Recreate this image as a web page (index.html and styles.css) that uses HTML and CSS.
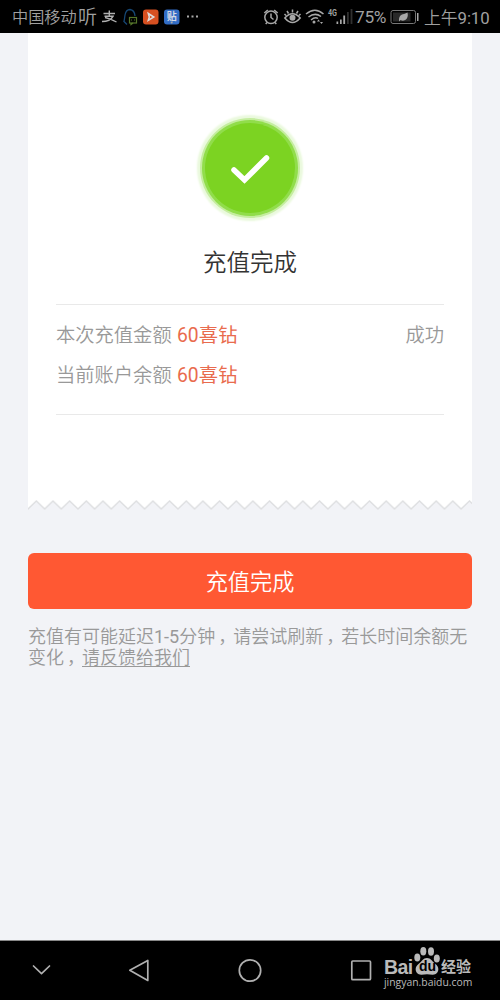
FILE: index.html
```
<!DOCTYPE html>
<html lang="zh-CN">
<head>
<meta charset="utf-8">
<title>充值完成</title>
<link rel="stylesheet" href="styles.css">
</head>
<body>
<div class="screen">
  <header class="status">
    <span class="carrier">中国移动</span>
    <span class="listen">听</span>
    <svg class="left-icons" width="103" height="20" viewBox="99 7 103 20">
      <path class="pay" d="M103.500 13.500H115M109.300 10.500V16M104.500 16.300H113Q110 21.500 102 21.500M105 17.500Q110 18.500 116.500 22"/>
      <path class="bell" d="M123.500 21L127 24.5M124 21.5Q124.500 19 125 15Q126 9.500 130 9.500Q134.500 10 135 16"/>
      <rect class="chat" x="129.500" y="17.500" width="7" height="5.500"/>
      <path class="chat" d="M131 20H132M134 20H135M131 23V24.500L133 23"/>
      <rect class="play-box" x="143" y="9.500" width="15.500" height="15" rx="3"/>
      <path class="play" d="M148.300 13.500L153.800 17L148.300 20.300L149.300 17Z"/>
      <rect class="post-box" x="164" y="9.500" width="15.500" height="15" rx="3"/>
      <text class="post" x="166.700" y="19.500">贴</text>
      <circle class="light" cx="171.700" cy="22.500" r="1"/>
      <path class="light" d="M187 15.500h2v2h-2zM191.500 15.500h2v2h-2zM196 15.500h2v2h-2z"/>
    </svg>
    <svg class="right-icons" width="93" height="22" viewBox="262 6 93 22">
      <g class="line">
        <circle cx="271" cy="17.300" r="6.200"/>
        <path d="M271 13.500V17.500L273.500 19.500M264.300 13L267.800 10M274.200 10L277.700 13M267 22.500L265.700 24M275 22.500L276.300 24"/>
        <path d="M284.800 18Q292.500 9.500 300.200 18Q292.500 27 284.800 18ZM292.500 9.500V12.500M287 11L288.500 13.500M298 11L296.500 13.500M284.500 14L286 15.500M300.500 14L299 15.500"/>
        <path d="M306 14Q315 6.500 323.500 14M308.500 17Q315 12 321 16.500M311 20Q315 16.500 318 18.500"/>
      </g>
      <circle class="light" cx="292.500" cy="17.800" r="3"/>
      <circle class="light" cx="314" cy="22" r="1.500"/>
      <path class="light" d="M317 21.500l1.500-2 1.500 2zM320 22l1.500 2 1.500-2z"/>
      <text class="network" x="328" y="16" textLength="9" lengthAdjust="spacingAndGlyphs">4G</text>
      <path class="light" d="M336.500 21.500h1.700v2.500h-1.700zM340 19.500h1.700v4.500h-1.700zM343.300 15.500h1.800v8.500h-1.800z"/>
      <path class="dim" d="M347 12h1.800v12h-1.800zM350.600 9h1.800v15h-1.800z"/>
    </svg>
    <span class="percent">75%</span>
    <svg class="battery" width="30" height="16" viewBox="390 9 30 16">
      <rect x="391" y="10.500" width="24.500" height="13" rx="2"/>
      <rect class="charge" x="393" y="12.500" width="17.500" height="9"/>
      <path class="light" d="M399 21.500Q398.500 16 402 14.500Q405 14 407.500 12.500Q408.500 17 406 19.500Q403.500 21.500 400.500 20ZM417 13h1.500v8H417z"/>
    </svg>
    <span class="clock">上午<span class="digits">9:10</span></span>
  </header>

  <main class="page">
    <section class="receipt">
      <div class="success">
        <svg width="50" height="50" viewBox="225 143 50 50"><path d="M234 170L244.500 180L266.500 158"/></svg>
      </div>
      <h1 class="title">充值完成</h1>
      <div class="details">
        <div class="row"><span>本次充值金额 <b>60喜钻</b></span><span>成功</span></div>
        <div class="row"><span>当前账户余额 <b>60喜钻</b></span></div>
      </div>
    </section>
    <svg class="tear" width="444" height="12">
      <defs>
        <pattern id="tooth" width="16.66" height="12" patternUnits="userSpaceOnUse">
          <path class="tooth-fill" d="M0 0H16.660V9L8.330 1L0 9Z"/>
          <path class="tooth-edge" d="M-1 8L0 9L8.330 1L16.660 9L17.660 8"/>
        </pattern>
      </defs>
      <rect width="444" height="12" fill="url(#tooth)"/>
    </svg>
    <button class="done" type="button">充值完成</button>
    <p class="note">充值有可能延迟<span class="digits">1-5</span>分钟<span class="comma">，</span>请尝试刷新<span class="comma">，</span>若长时间余额无<br>变化<span class="comma">，</span><a>请反馈给我们</a></p>
  </main>

  <footer class="nav">
    <svg class="nav-icons" width="380" height="59" viewBox="0 941 380 59">
      <path d="M33.500 966L41.500 973.700L49.500 966"/>
      <path d="M147.800 960.500V980.500L129.800 970.200Z"/>
      <circle cx="250" cy="970.500" r="10.700"/>
      <rect x="351.800" y="961" width="18.700" height="18.700" rx="1"/>
    </svg>
    <div class="brand">
      <div class="wordmark">
        <span class="logo">Bai</span>
        <span class="paw">
          <svg width="27" height="28" viewBox="414 947 27 28">
            <path d="M427 958C423 958 422 961.500 418.500 964C413.500 967.500 415.500 975 421.500 974.700Q427 974 432.500 974.700C438.500 975 440.500 967.500 435.500 964C432 961.500 431 958 427 958Z"/>
            <ellipse cx="417.300" cy="957.500" rx="3" ry="4"/>
            <ellipse cx="423.300" cy="951.300" rx="3" ry="4.200"/>
            <ellipse cx="431" cy="951.500" rx="3" ry="4.200"/>
            <ellipse cx="436.800" cy="958.500" rx="3" ry="4"/>
          </svg>
          <span class="du">du</span>
        </span>
        <span class="experience">经验</span>
      </div>
      <div class="site">jingyan.baidu.com</div>
    </div>
  </footer>
</div>
</body>
</html>
```
FILE: styles.css
```
* { box-sizing: border-box; }
body { margin: 0; font-family: Roboto, "Noto Sans CJK SC", sans-serif; }
svg { display: block; flex: none; }
.screen { width: 500px; height: 1000px; display: flex; flex-direction: column; background: #f2f3f7; overflow: hidden; }
.status { height: 33px; flex: none; display: flex; align-items: center; background: #000; color: #a0a0a0; white-space: nowrap; padding-left: 12px; padding-top: 1px; line-height: 32px; }
.carrier { width: 66px; font-size: 16.2px; font-weight: 350; padding-top: 2px; }
.listen { width: 21px; font-size: 19px; font-weight: 350; padding-top: 2px; }
.right-icons { margin-left: 60px; }
.percent { width: 35px; font-size: 17.3px; letter-spacing: -0.3px; }
.clock { margin-left: 4px; font-size: 16.8px; font-weight: 350; padding-top: 1px; }
.digits { font-weight: 400; }
.clock .digits { letter-spacing: -0.1px; }
.light { fill: #a8a8a8; }
.dim { fill: #303030; }
.pay { fill: none; stroke: #b0b0b0; stroke-width: 1.4; }
.bell { fill: none; stroke: #164774; stroke-width: 1.3; }
.chat { fill: none; stroke: #55762a; stroke-width: 1.2; }
.play-box { fill: #d65021; }
.play { fill: none; stroke: #ddd; stroke-width: 1.5; }
.post-box { fill: #326dc5; }
.post { font-size: 10px; font-weight: 700; fill: #d2d9e5; }
.line { fill: none; stroke: #a8a8a8; stroke-width: 1.5; }
.network { font-size: 9.5px; font-weight: 700; fill: #a0a0a0; }
.battery rect { fill: none; stroke: #777; stroke-width: 1; }
.battery .charge { fill: #292929; stroke: none; }

.page { flex: 1; padding: 0 28px; }
.receipt { height: 467px; padding: 87px 28px 0; background: #fff; display: flex; flex-direction: column; align-items: center; }
.success { width: 90px; height: 90px; margin-top: 3px; flex: none; border-radius: 50%; display: grid; place-items: center; background: #7cd322; box-shadow: 0 0 0 3px #91dd4b, 0 0 0 5px #c5eda0, 0 0 2px 8px #eaf9dd; }
.success path { fill: none; stroke: #fff; stroke-width: 5.5; stroke-linecap: round; }
.title { margin: 33px 0 0; height: 34px; line-height: 34px; font-size: 23.5px; font-weight: 350; color: #333; }
.details { width: 100%; height: 111px; margin-top: 24px; padding-top: 11px; border-top: 1px solid #e9e9e9; border-bottom: 1px solid #e9e9e9; }
.row { height: 40px; line-height: 40px; display: flex; justify-content: space-between; font-size: 19.3px; font-weight: 350; color: #999; white-space: nowrap; }
.row b { font-weight: 400; color: #e96b4e; margin-left: 0.5px; letter-spacing: 0.1px; }
.tear { width: 444px; height: 12px; }
.tooth-fill { fill: #fff; }
.tooth-edge { fill: none; stroke: #dedfe1; stroke-width: 1.4; }
.done { display: block; width: 444px; height: 56px; margin: 41px 0 0; padding: 2px 0 0; border: 0; border-radius: 6px; background: #ff5833; color: #fff; font: 350 22.2px/54px Roboto, "Noto Sans CJK SC", sans-serif; }
.note { margin: 17px 0 0; font-size: 18px; font-weight: 350; line-height: 21px; color: #999; white-space: nowrap; }
.comma { padding-left: 3px; margin-right: -3px; }
.note a { text-decoration: underline; text-underline-offset: 2px; text-decoration-thickness: 1px; }

.nav { height: 60px; flex: none; display: flex; background: #000; border-top: 1px solid #888; }
.nav-icons { fill: none; stroke: #b0b0b0; stroke-width: 1.7; stroke-linejoin: round; stroke-linecap: round; }
.brand { padding: 6px 0 0 4px; color: #bababa; }
.wordmark { display: flex; align-items: flex-end; height: 28px; white-space: nowrap; }
.logo { width: 30px; font: 700 19.5px/15px "Liberation Sans", sans-serif; letter-spacing: -0.6px; }
.paw { position: relative; width: 27px; }
.paw svg { fill: #bababa; }
.du { position: absolute; left: 5px; top: 12px; font: 700 14px/14px "Liberation Sans", sans-serif; color: #000; }
.experience { font-size: 15px; line-height: 15px; font-weight: 700; }
.site { height: 14px; font: 10.4px/14px "Open Sans", sans-serif; }
```
